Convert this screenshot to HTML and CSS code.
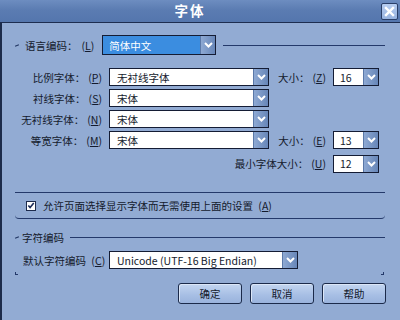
FILE: index.html
```html
<!DOCTYPE html>
<html lang="zh-CN">
<head>
<meta charset="utf-8">
<title>字体</title>
<link rel="stylesheet" href="styles.css">
</head>
<body>
<div class="window">
  <div class="titlebar">
    <span class="spacer"></span>
    <span class="title">字体</span>
    <span class="close"><svg width="11" height="11" viewBox="0 0 11 11"><path d="M2 2 L9 9 M9 2 L2 9" stroke="#fff" stroke-width="2.4" stroke-linecap="square"/></svg></span>
  </div>
  <div class="body">
    <div class="legend-row">
      <span class="tick"></span>
      <span class="lbl">语言编码：</span>
      <span class="mn">(<u>L</u>)</span>
      <div class="select lang">
        <span class="field sel">简体中文</span>
        <span class="drop"><svg width="9" height="6" viewBox="0 0 9 6"><path d="M1 1 L4.5 4.5 L8 1" fill="none" stroke="#fff" stroke-width="2"/></svg></span>
      </div>
      <span class="rule rule-end"></span>
    </div>

    <div class="font-grid">
      <span class="flabel">比例字体：<span class="mn">(<u>P</u>)</span></span>
      <div class="select"><span class="field">无衬线字体</span><span class="drop"><svg width="9" height="6" viewBox="0 0 9 6"><path d="M1 1 L4.5 4.5 L8 1" fill="none" stroke="#fff" stroke-width="2"/></svg></span></div>
      <span class="slabel">大小：<span class="mn">(<u>Z</u>)</span></span>
      <div class="select size"><span class="field">16</span><span class="drop"><svg width="9" height="6" viewBox="0 0 9 6"><path d="M1 1 L4.5 4.5 L8 1" fill="none" stroke="#fff" stroke-width="2"/></svg></span></div>

      <span class="flabel">衬线字体：<span class="mn">(<u>S</u>)</span></span>
      <div class="select"><span class="field">宋体</span><span class="drop"><svg width="9" height="6" viewBox="0 0 9 6"><path d="M1 1 L4.5 4.5 L8 1" fill="none" stroke="#fff" stroke-width="2"/></svg></span></div>
      <span class="empty"></span><span class="empty"></span>

      <span class="flabel">无衬线字体：<span class="mn">(<u>N</u>)</span></span>
      <div class="select"><span class="field">宋体</span><span class="drop"><svg width="9" height="6" viewBox="0 0 9 6"><path d="M1 1 L4.5 4.5 L8 1" fill="none" stroke="#fff" stroke-width="2"/></svg></span></div>
      <span class="empty"></span><span class="empty"></span>

      <span class="flabel">等宽字体：<span class="mn">(<u>M</u>)</span></span>
      <div class="select"><span class="field">宋体</span><span class="drop"><svg width="9" height="6" viewBox="0 0 9 6"><path d="M1 1 L4.5 4.5 L8 1" fill="none" stroke="#fff" stroke-width="2"/></svg></span></div>
      <span class="slabel">大小：<span class="mn">(<u>E</u>)</span></span>
      <div class="select size"><span class="field">13</span><span class="drop"><svg width="9" height="6" viewBox="0 0 9 6"><path d="M1 1 L4.5 4.5 L8 1" fill="none" stroke="#fff" stroke-width="2"/></svg></span></div>

      <span class="minlabel">最小字体大小：<span class="mn">(<u>U</u>)</span></span>
      <div class="select size"><span class="field">12</span><span class="drop"><svg width="9" height="6" viewBox="0 0 9 6"><path d="M1 1 L4.5 4.5 L8 1" fill="none" stroke="#fff" stroke-width="2"/></svg></span></div>
    </div>

    <div class="check-box-group">
      <label class="check-row">
        <span class="checkbox"><svg width="9" height="9" viewBox="0 0 9 9"><path d="M1.5 4.5 L3.5 6.8 L7.6 1.8" fill="none" stroke="#1a2a58" stroke-width="1.8"/></svg></span>
        <span>允许页面选择显示字体而无需使用上面的设置 <span class="mn">(<u>A</u>)</span></span>
      </label>
    </div>

    <div class="legend-row legend2">
      <span class="tick"></span>
      <span class="lbl">字符编码</span>
      <span class="rule rule-end2"></span>
    </div>

    <div class="enc-row">
      <span class="elabel">默认字符编码 <span class="mn">(<u>C</u>)</span></span>
      <div class="select enc"><span class="field">Unicode (UTF-16 Big Endian)</span><span class="drop"><svg width="9" height="6" viewBox="0 0 9 6"><path d="M1 1 L4.5 4.5 L8 1" fill="none" stroke="#fff" stroke-width="2"/></svg></span></div>
    </div>

    <div class="corners"><span class="c-left"></span><span class="c-right"></span></div>

    <div class="buttons">
      <button class="btn">确定</button>
      <button class="btn">取消</button>
      <button class="btn">帮助</button>
    </div>
  </div>
</div>
</body>
</html>
```

FILE: styles.css
```css
* { box-sizing: border-box; }
html, body { margin: 0; padding: 0; }
body {
  width: 400px;
  height: 320px;
  overflow: hidden;
  background: #92abd3;
  font-family: "Noto Sans CJK SC", "Noto Sans", sans-serif;
  font-size: 10.5px;
  color: #141a2c;
}
.window {
  width: 400px;
  height: 320px;
  display: flex;
  flex-direction: column;
}
.titlebar {
  height: 23px;
  flex: none;
  display: grid;
  grid-template-columns: 1fr auto 1fr;
  align-items: center;
  background: linear-gradient(#6d8dc0 0%, #5b7cb2 45%, #5476ad 100%);
  border-bottom: 1px solid #1d2d4f;
  padding-right: 2px;
}
.title {
  color: #fff;
  font-weight: bold;
  font-size: 13.5px;
  letter-spacing: 2px;
  margin-right: 18px;
  line-height: 1;
}
.close {
  justify-self: end;
  width: 17px;
  height: 17px;
  display: flex;
  align-items: center;
  justify-content: center;
  background: linear-gradient(#b7cdf0, #97b3e0);
  border: 1px solid #2a3f68;
  border-radius: 2px;
}
.body {
  flex: 1;
  border-left: 2px solid #1c2b4a;
  padding: 0 15px 0 13px;
  display: flex;
  flex-direction: column;
}
.legend-row {
  margin-top: 12px;
  height: 20px;
  display: flex;
  align-items: center;
}
.tick {
  width: 4px;
  height: 1px;
  background: #1f3360;
  margin-right: 6px;
  transform: rotate(-20deg);
}
.lbl { white-space: nowrap; }
.mn { margin-left: 3px; }
.legend-row .mn { margin-left: 4px; }
.rule {
  flex: 1;
  height: 1px;
  background: #24396a;
}
.rule-end { margin-left: 7px; }
.select {
  display: flex;
  height: 18px;
  border: 1px solid #141c34;
  background: #fff;
}
.select .field {
  flex: 1;
  display: flex;
  align-items: center;
  padding-left: 7px;
  white-space: nowrap;
  overflow: hidden;
}
.select .drop {
  width: 15px;
  flex: none;
  display: flex;
  align-items: center;
  justify-content: center;
  background: linear-gradient(90deg, #8ea9d3, #6786b8);
  border-left: 1px solid #5a78a8;
}
.select.lang {
  margin-left: 8px;
  width: 114px;
  height: 20px;
}
.field.sel {
  background: #3b8de0;
  color: #fff;
  padding-left: 6px;
}
.font-grid {
  margin-top: 13px;
  display: grid;
  grid-template-columns: 87px 160px 50px 46px;
  grid-auto-rows: 18px;
  column-gap: 7px;
  row-gap: 3px;
  align-items: center;
}
.flabel, .slabel, .minlabel {
  justify-self: end;
  white-space: nowrap;
}
.minlabel {
  grid-column: 1 / 4;
  margin-top: 5px;
}
.minlabel + .select { margin-top: 5px; }
.select.size .field { padding-left: 6px; }
.check-box-group {
  margin-top: 22px;
  height: 27px;
  border-top: 1px solid #24396a;
  border-bottom: 1px solid #24396a;
  border-radius: 0 0 4px 4px;
  display: flex;
  align-items: center;
  padding-left: 11px;
}
.check-row {
  display: flex;
  align-items: center;
  gap: 7px;
  white-space: nowrap;
}
.checkbox {
  width: 10px;
  height: 10px;
  background: #fff;
  border: 1px solid #1d2b4c;
  display: flex;
  align-items: center;
  justify-content: center;
}
.legend2 {
  margin-top: 11px;
  height: 14px;
}
.legend2 .tick { margin-right: 3px; }
.rule-end2 { margin-left: 6px; }
.enc-row {
  margin-top: 7px;
  display: flex;
  align-items: center;
  padding-left: 8px;
}
.elabel {
  width: 80px;
  white-space: nowrap;
}
.select.enc {
  margin-left: 6px;
  width: 189px;
}
.corners {
  margin-top: 3px;
  height: 3px;
  display: flex;
  justify-content: space-between;
}
.c-left {
  width: 3px;
  height: 3px;
  border-left: 1px solid #24396a;
  border-bottom: 1px solid #24396a;
}
.c-right {
  width: 3px;
  height: 3px;
  border-right: 1px solid #24396a;
  border-bottom: 1px solid #24396a;
  margin-right: 1px;
}
.buttons {
  margin-top: 8px;
  display: flex;
  justify-content: flex-end;
  gap: 8px;
  margin-right: -1px;
}
.btn {
  width: 64px;
  height: 21px;
  padding: 0;
  font-family: inherit;
  font-size: 10.5px;
  color: #141a2c;
  background: linear-gradient(#c3d5f0, #a6bee4 60%, #9ab3dc);
  border: 1px solid #1b2a4a;
  border-radius: 3px;
  box-shadow: inset 1px 1px 0 #dbe6f7;
}
```
